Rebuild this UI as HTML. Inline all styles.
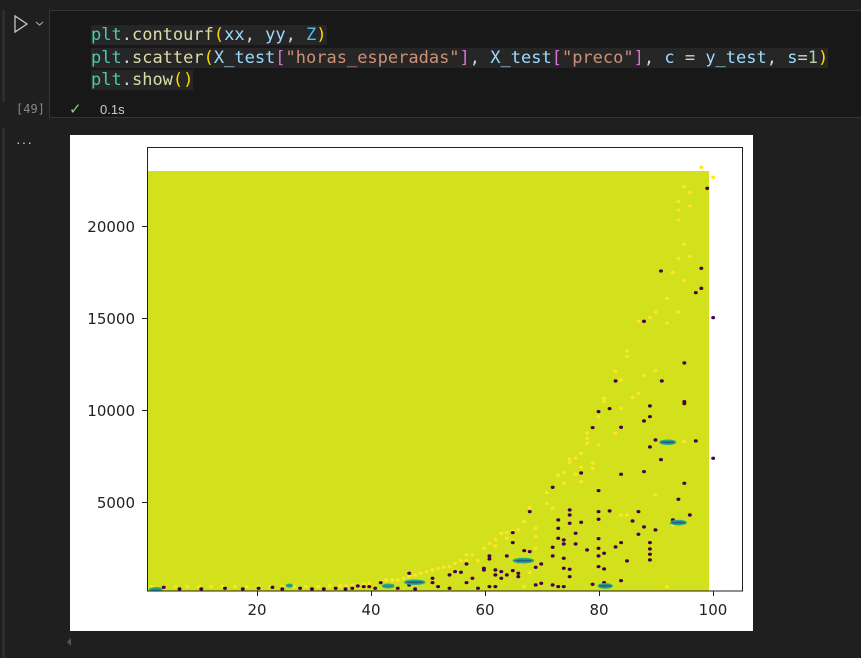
<!DOCTYPE html>
<html><head><meta charset="utf-8"><style>
body{margin:0;width:861px;height:658px;background:#1f1f1f;overflow:hidden;position:relative;font-family:"Liberation Sans",sans-serif}
.abs{position:absolute}
.code{font-family:"DejaVu Sans Mono","Liberation Mono",monospace;font-size:17px;white-space:pre;color:#d4d4d4;line-height:22.5px}
.hl{background:#262626}
.f{color:#dcdcaa}.v{color:#9cdcfe}.p{color:#4ec9b0}.s{color:#ce9178}.y{color:#ffd700}.m{color:#da70d6}.c{color:#4fc1ff}
.tick{font-family:"DejaVu Sans",sans-serif;font-size:15px;fill:#222}
</style></head><body>
<div class="abs" style="left:2px;top:10px;width:3px;height:92px;background:#2d2d2d"></div>
<div class="abs" style="left:2px;top:128px;width:3px;height:530px;background:#2d2d2d"></div>
<svg class="abs" style="left:12px;top:14px" width="40" height="20"><path d="M3 2 L3 18 L15 10 Z" fill="none" stroke="#c5c5c5" stroke-width="1.3"/><path d="M24 8 L27.5 11 L31 8" fill="none" stroke="#aaa" stroke-width="1.1"/></svg>
<div class="abs" style="left:49px;top:10px;width:812px;height:108px;border:1px solid #333;border-right:none;background:#181818;box-sizing:border-box"></div>
<div class="abs code" style="left:91px;top:24px"><span class="hl"><span class="p">plt</span>.<span class="f">contourf</span><span class="y">(</span><span class="v">xx</span>, <span class="v">yy</span>, <span class="c">Z</span><span class="y">)</span></span>
<span class="hl"><span class="p">plt</span>.<span class="f">scatter</span><span class="y">(</span><span class="v">X_test</span><span class="m">[</span><span class="s">"horas_esperadas"</span><span class="m">]</span>, <span class="v">X_test</span><span class="m">[</span><span class="s">"preco"</span><span class="m">]</span>, <span class="v">c</span> = <span class="v">y_test</span>, <span class="v">s</span>=<span style="color:#b5cea8">1</span><span class="y">)</span></span>
<span class="hl"><span class="p">plt</span>.<span class="f">show</span><span class="y">()</span></span></div>
<div class="abs" style="left:16px;top:102px;color:#888;font-size:12px;font-family:'DejaVu Sans Mono',monospace">[49]</div>
<div class="abs" style="left:69px;top:100px;color:#89d185;font-size:15px">✓</div>
<div class="abs" style="left:100px;top:102px;color:#ccc;font-size:13px">0.1s</div>
<div class="abs" style="left:16px;top:134px;color:#ccc;font-size:14px;letter-spacing:1px">···</div>
<svg class="abs" style="left:64px;top:636px" width="10" height="12"><path d="M7 2 L3 6 L7 10Z" fill="#555"/></svg>
<div class="abs" style="left:70px;top:135px;width:683px;height:496px;background:#fff"></div>
<svg class="abs" style="left:0;top:0" width="861" height="658">
<rect x="147" y="171" width="562" height="420" fill="#d2e11b"/>
<g transform="translate(140,140) scale(0.3953,0.3333)">
<g fill="#fde725">
<ellipse cx="1420" cy="82" rx="5" ry="5"/><ellipse cx="1450" cy="112" rx="5" ry="5"/><ellipse cx="1377" cy="140" rx="5" ry="5"/><ellipse cx="1391" cy="158" rx="5" ry="5"/><ellipse cx="1362" cy="185" rx="5" ry="5"/><ellipse cx="1391" cy="198" rx="5" ry="5"/><ellipse cx="1362" cy="210" rx="5" ry="5"/><ellipse cx="1362" cy="240" rx="5" ry="5"/><ellipse cx="1377" cy="313" rx="5" ry="5"/><ellipse cx="1362" cy="355" rx="5" ry="5"/><ellipse cx="1391" cy="349" rx="5" ry="5"/><ellipse cx="1348" cy="397" rx="5" ry="5"/><ellipse cx="1377" cy="421" rx="5" ry="5"/><ellipse cx="1333" cy="475" rx="5" ry="5"/><ellipse cx="1304" cy="516" rx="5" ry="5"/><ellipse cx="1362" cy="516" rx="5" ry="5"/><ellipse cx="1290" cy="533" rx="5" ry="5"/><ellipse cx="1261" cy="544" rx="5" ry="5"/><ellipse cx="1333" cy="549" rx="5" ry="5"/><ellipse cx="1232" cy="633" rx="5" ry="5"/><ellipse cx="1232" cy="650" rx="5" ry="5"/><ellipse cx="1304" cy="692" rx="5" ry="5"/><ellipse cx="1275" cy="706" rx="5" ry="5"/><ellipse cx="1203" cy="694" rx="5" ry="5"/><ellipse cx="1217" cy="720" rx="5" ry="5"/><ellipse cx="1261" cy="760" rx="5" ry="5"/><ellipse cx="1246" cy="772" rx="5" ry="5"/><ellipse cx="1174" cy="775" rx="5" ry="5"/><ellipse cx="1174" cy="785" rx="5" ry="5"/><ellipse cx="1217" cy="805" rx="5" ry="5"/><ellipse cx="1160" cy="830" rx="5" ry="5"/><ellipse cx="1203" cy="880" rx="5" ry="5"/><ellipse cx="1131" cy="880" rx="5" ry="5"/><ellipse cx="1131" cy="895" rx="5" ry="5"/><ellipse cx="1131" cy="910" rx="5" ry="5"/><ellipse cx="1160" cy="915" rx="5" ry="5"/><ellipse cx="1116" cy="940" rx="5" ry="5"/><ellipse cx="1102" cy="955" rx="5" ry="5"/><ellipse cx="1087" cy="958" rx="5" ry="5"/><ellipse cx="1087" cy="968" rx="5" ry="5"/><ellipse cx="1145" cy="970" rx="5" ry="5"/><ellipse cx="1145" cy="985" rx="5" ry="5"/><ellipse cx="1116" cy="982" rx="5" ry="5"/><ellipse cx="1072" cy="997" rx="5" ry="5"/><ellipse cx="1102" cy="1003" rx="5" ry="5"/><ellipse cx="1116" cy="1025" rx="5" ry="5"/><ellipse cx="1072" cy="1030" rx="5" ry="5"/><ellipse cx="1058" cy="1005" rx="5" ry="5"/><ellipse cx="1029" cy="1058" rx="5" ry="5"/><ellipse cx="1029" cy="1090" rx="5" ry="5"/><ellipse cx="1044" cy="1105" rx="5" ry="5"/><ellipse cx="986" cy="1103" rx="5" ry="5"/><ellipse cx="972" cy="1145" rx="5" ry="5"/><ellipse cx="957" cy="1170" rx="5" ry="5"/><ellipse cx="943" cy="1172" rx="5" ry="5"/><ellipse cx="928" cy="1178" rx="5" ry="5"/><ellipse cx="928" cy="1195" rx="5" ry="5"/><ellipse cx="914" cy="1180" rx="5" ry="5"/><ellipse cx="899" cy="1198" rx="5" ry="5"/><ellipse cx="899" cy="1218" rx="5" ry="5"/><ellipse cx="884" cy="1210" rx="5" ry="5"/><ellipse cx="870" cy="1225" rx="5" ry="5"/><ellipse cx="841" cy="1245" rx="5" ry="5"/><ellipse cx="826" cy="1245" rx="5" ry="5"/><ellipse cx="855" cy="1262" rx="5" ry="5"/><ellipse cx="826" cy="1262" rx="5" ry="5"/><ellipse cx="812" cy="1262" rx="5" ry="5"/><ellipse cx="797" cy="1270" rx="5" ry="5"/><ellipse cx="783" cy="1280" rx="5" ry="5"/><ellipse cx="768" cy="1282" rx="5" ry="5"/><ellipse cx="754" cy="1285" rx="5" ry="5"/><ellipse cx="740" cy="1290" rx="5" ry="5"/><ellipse cx="725" cy="1295" rx="5" ry="5"/><ellipse cx="710" cy="1300" rx="5" ry="5"/><ellipse cx="696" cy="1305" rx="5" ry="5"/><ellipse cx="681" cy="1310" rx="5" ry="5"/><ellipse cx="667" cy="1315" rx="5" ry="5"/><ellipse cx="652" cy="1320" rx="5" ry="5"/><ellipse cx="638" cy="1320" rx="5" ry="5"/><ellipse cx="623" cy="1320" rx="5" ry="5"/><ellipse cx="609" cy="1325" rx="5" ry="5"/><ellipse cx="580" cy="1330" rx="5" ry="5"/><ellipse cx="566" cy="1333" rx="5" ry="5"/><ellipse cx="551" cy="1335" rx="5" ry="5"/><ellipse cx="537" cy="1335" rx="5" ry="5"/><ellipse cx="522" cy="1338" rx="5" ry="5"/><ellipse cx="507" cy="1338" rx="5" ry="5"/><ellipse cx="1001" cy="1165" rx="5" ry="5"/><ellipse cx="1001" cy="1190" rx="5" ry="5"/><ellipse cx="986" cy="1298" rx="5" ry="5"/><ellipse cx="972" cy="1340" rx="5" ry="5"/><ellipse cx="1333" cy="1340" rx="5" ry="5"/><ellipse cx="1217" cy="1125" rx="5" ry="5"/><ellipse cx="1232" cy="1125" rx="5" ry="5"/><ellipse cx="1348" cy="1155" rx="5" ry="5"/><ellipse cx="1377" cy="905" rx="5" ry="5"/><ellipse cx="1304" cy="1065" rx="5" ry="5"/><ellipse cx="1001" cy="1225" rx="5" ry="5"/>
<ellipse cx="30" cy="1340" rx="5" ry="5"/><ellipse cx="60" cy="1340" rx="5" ry="5"/><ellipse cx="90" cy="1340" rx="5" ry="5"/><ellipse cx="120" cy="1340" rx="5" ry="5"/><ellipse cx="150" cy="1340" rx="5" ry="5"/><ellipse cx="180" cy="1340" rx="5" ry="5"/><ellipse cx="210" cy="1340" rx="5" ry="5"/><ellipse cx="240" cy="1340" rx="5" ry="5"/><ellipse cx="270" cy="1340" rx="5" ry="5"/><ellipse cx="300" cy="1340" rx="5" ry="5"/><ellipse cx="330" cy="1340" rx="5" ry="5"/><ellipse cx="360" cy="1340" rx="5" ry="5"/><ellipse cx="390" cy="1340" rx="5" ry="5"/><ellipse cx="420" cy="1340" rx="5" ry="5"/><ellipse cx="450" cy="1340" rx="5" ry="5"/><ellipse cx="480" cy="1338" rx="5" ry="5"/>
</g>
<g fill="#440154">
<ellipse cx="1435" cy="145" rx="5" ry="5"/><ellipse cx="1420" cy="385" rx="5" ry="5"/><ellipse cx="1420" cy="445" rx="5" ry="5"/><ellipse cx="1406" cy="458" rx="5" ry="5"/><ellipse cx="1318" cy="393" rx="5" ry="5"/><ellipse cx="1450" cy="533" rx="5" ry="5"/><ellipse cx="1275" cy="544" rx="5" ry="5"/><ellipse cx="1377" cy="669" rx="5" ry="5"/><ellipse cx="1320" cy="723" rx="5" ry="5"/><ellipse cx="1203" cy="723" rx="5" ry="5"/><ellipse cx="1377" cy="785" rx="5" ry="5"/><ellipse cx="1377" cy="791" rx="5" ry="5"/><ellipse cx="1290" cy="798" rx="5" ry="5"/><ellipse cx="1290" cy="830" rx="5" ry="5"/><ellipse cx="1275" cy="843" rx="5" ry="5"/><ellipse cx="1188" cy="806" rx="5" ry="5"/><ellipse cx="1160" cy="815" rx="5" ry="5"/><ellipse cx="1145" cy="863" rx="5" ry="5"/><ellipse cx="1217" cy="862" rx="5" ry="5"/><ellipse cx="1304" cy="900" rx="5" ry="5"/><ellipse cx="1406" cy="903" rx="5" ry="5"/><ellipse cx="1290" cy="921" rx="5" ry="5"/><ellipse cx="1318" cy="959" rx="5" ry="5"/><ellipse cx="1450" cy="955" rx="5" ry="5"/><ellipse cx="1275" cy="995" rx="5" ry="5"/><ellipse cx="1217" cy="1003" rx="5" ry="5"/><ellipse cx="1116" cy="999" rx="5" ry="5"/><ellipse cx="1160" cy="1052" rx="5" ry="5"/><ellipse cx="1377" cy="1030" rx="5" ry="5"/><ellipse cx="1362" cy="1078" rx="5" ry="5"/><ellipse cx="1044" cy="1042" rx="5" ry="5"/><ellipse cx="986" cy="1115" rx="5" ry="5"/><ellipse cx="1058" cy="1140" rx="5" ry="5"/><ellipse cx="1087" cy="1110" rx="5" ry="5"/><ellipse cx="1087" cy="1125" rx="5" ry="5"/><ellipse cx="1058" cy="1165" rx="5" ry="5"/><ellipse cx="1087" cy="1150" rx="5" ry="5"/><ellipse cx="1116" cy="1147" rx="5" ry="5"/><ellipse cx="1160" cy="1115" rx="5" ry="5"/><ellipse cx="1188" cy="1113" rx="5" ry="5"/><ellipse cx="1160" cy="1138" rx="5" ry="5"/><ellipse cx="1246" cy="1143" rx="5" ry="5"/><ellipse cx="1261" cy="1115" rx="5" ry="5"/><ellipse cx="1275" cy="1161" rx="5" ry="5"/><ellipse cx="1304" cy="1170" rx="5" ry="5"/><ellipse cx="1391" cy="1125" rx="5" ry="5"/><ellipse cx="1348" cy="1140" rx="5" ry="5"/><ellipse cx="1261" cy="1183" rx="5" ry="5"/><ellipse cx="1102" cy="1180" rx="5" ry="5"/><ellipse cx="1072" cy="1200" rx="5" ry="5"/><ellipse cx="1072" cy="1212" rx="5" ry="5"/><ellipse cx="1058" cy="1195" rx="5" ry="5"/><ellipse cx="1102" cy="1212" rx="5" ry="5"/><ellipse cx="1131" cy="1230" rx="5" ry="5"/><ellipse cx="1160" cy="1196" rx="5" ry="5"/><ellipse cx="1160" cy="1225" rx="5" ry="5"/><ellipse cx="1174" cy="1240" rx="5" ry="5"/><ellipse cx="1203" cy="1221" rx="5" ry="5"/><ellipse cx="1217" cy="1208" rx="5" ry="5"/><ellipse cx="1290" cy="1208" rx="5" ry="5"/><ellipse cx="1290" cy="1227" rx="5" ry="5"/><ellipse cx="1290" cy="1243" rx="5" ry="5"/><ellipse cx="1290" cy="1260" rx="5" ry="5"/><ellipse cx="1232" cy="1263" rx="5" ry="5"/><ellipse cx="1160" cy="1248" rx="5" ry="5"/><ellipse cx="1160" cy="1280" rx="5" ry="5"/><ellipse cx="1174" cy="1287" rx="5" ry="5"/><ellipse cx="1044" cy="1222" rx="5" ry="5"/><ellipse cx="1044" cy="1248" rx="5" ry="5"/><ellipse cx="1072" cy="1255" rx="5" ry="5"/><ellipse cx="1087" cy="1288" rx="5" ry="5"/><ellipse cx="1072" cy="1285" rx="5" ry="5"/><ellipse cx="1087" cy="1310" rx="5" ry="5"/><ellipse cx="1015" cy="1272" rx="5" ry="5"/><ellipse cx="1001" cy="1282" rx="5" ry="5"/><ellipse cx="986" cy="1235" rx="5" ry="5"/><ellipse cx="972" cy="1232" rx="5" ry="5"/><ellipse cx="957" cy="1265" rx="5" ry="5"/><ellipse cx="957" cy="1300" rx="5" ry="5"/><ellipse cx="957" cy="1310" rx="5" ry="5"/><ellipse cx="943" cy="1178" rx="5" ry="5"/><ellipse cx="943" cy="1208" rx="5" ry="5"/><ellipse cx="928" cy="1248" rx="5" ry="5"/><ellipse cx="943" cy="1292" rx="5" ry="5"/><ellipse cx="928" cy="1305" rx="5" ry="5"/><ellipse cx="914" cy="1295" rx="5" ry="5"/><ellipse cx="914" cy="1315" rx="5" ry="5"/><ellipse cx="899" cy="1290" rx="5" ry="5"/><ellipse cx="899" cy="1305" rx="5" ry="5"/><ellipse cx="884" cy="1248" rx="5" ry="5"/><ellipse cx="884" cy="1257" rx="5" ry="5"/><ellipse cx="870" cy="1285" rx="5" ry="5"/><ellipse cx="870" cy="1290" rx="5" ry="5"/><ellipse cx="841" cy="1315" rx="5" ry="5"/><ellipse cx="826" cy="1328" rx="5" ry="5"/><ellipse cx="826" cy="1272" rx="5" ry="5"/><ellipse cx="812" cy="1297" rx="5" ry="5"/><ellipse cx="797" cy="1295" rx="5" ry="5"/><ellipse cx="783" cy="1305" rx="5" ry="5"/><ellipse cx="855" cy="1345" rx="5" ry="5"/><ellipse cx="884" cy="1340" rx="5" ry="5"/><ellipse cx="899" cy="1340" rx="5" ry="5"/><ellipse cx="1001" cy="1335" rx="5" ry="5"/><ellipse cx="1015" cy="1330" rx="5" ry="5"/><ellipse cx="1044" cy="1335" rx="5" ry="5"/><ellipse cx="1058" cy="1340" rx="5" ry="5"/><ellipse cx="1072" cy="1340" rx="5" ry="5"/><ellipse cx="1145" cy="1333" rx="5" ry="5"/><ellipse cx="1174" cy="1328" rx="5" ry="5"/><ellipse cx="1217" cy="1322" rx="5" ry="5"/><ellipse cx="783" cy="1345" rx="5" ry="5"/><ellipse cx="754" cy="1340" rx="5" ry="5"/><ellipse cx="740" cy="1315" rx="5" ry="5"/><ellipse cx="740" cy="1328" rx="5" ry="5"/><ellipse cx="696" cy="1347" rx="5" ry="5"/><ellipse cx="681" cy="1300" rx="5" ry="5"/><ellipse cx="681" cy="1335" rx="5" ry="5"/><ellipse cx="652" cy="1345" rx="5" ry="5"/><ellipse cx="638" cy="1338" rx="5" ry="5"/><ellipse cx="609" cy="1328" rx="5" ry="5"/><ellipse cx="595" cy="1345" rx="5" ry="5"/><ellipse cx="580" cy="1340" rx="5" ry="5"/><ellipse cx="566" cy="1340" rx="5" ry="5"/><ellipse cx="551" cy="1338" rx="5" ry="5"/><ellipse cx="537" cy="1345" rx="5" ry="5"/>
<ellipse cx="45" cy="1347" rx="5" ry="5"/><ellipse cx="60" cy="1342" rx="5" ry="5"/><ellipse cx="100" cy="1347" rx="5" ry="5"/><ellipse cx="155" cy="1347" rx="5" ry="5"/><ellipse cx="215" cy="1345" rx="5" ry="5"/><ellipse cx="260" cy="1347" rx="5" ry="5"/><ellipse cx="300" cy="1345" rx="5" ry="5"/><ellipse cx="335" cy="1342" rx="5" ry="5"/><ellipse cx="360" cy="1347" rx="5" ry="5"/><ellipse cx="405" cy="1345" rx="5" ry="5"/><ellipse cx="435" cy="1347" rx="5" ry="5"/><ellipse cx="465" cy="1347" rx="5" ry="5"/><ellipse cx="495" cy="1345" rx="5" ry="5"/><ellipse cx="520" cy="1347" rx="5" ry="5"/>
</g>
<g fill="#21918c" stroke="#2fb47c" stroke-width="3">
<ellipse cx="970" cy="1262" rx="26" ry="7"/><ellipse cx="1335" cy="907" rx="20" ry="7"/><ellipse cx="1362" cy="1148" rx="20" ry="7"/><ellipse cx="695" cy="1327" rx="26" ry="7"/><ellipse cx="627" cy="1338" rx="14" ry="6"/><ellipse cx="1177" cy="1338" rx="18" ry="7"/><ellipse cx="378" cy="1337" rx="8" ry="5"/><ellipse cx="40" cy="1348" rx="16" ry="5"/>
</g>
<g fill="#31568b"><rect x="950" y="1260" width="40" height="4"/><rect x="1318" y="905" width="34" height="4"/><rect x="1345" y="1146" width="34" height="4"/><rect x="675" y="1325" width="40" height="4"/><rect x="1162" y="1336" width="30" height="4"/></g>
</g>
<rect x="147.5" y="147.5" width="595" height="443.5" fill="none" stroke="#222" stroke-width="1"/>
<g stroke="#222" stroke-width="1">
<line x1="142" y1="226.5" x2="147" y2="226.5"/><line x1="142" y1="318.5" x2="147" y2="318.5"/><line x1="142" y1="410.5" x2="147" y2="410.5"/><line x1="142" y1="502.5" x2="147" y2="502.5"/>
<line x1="257.5" y1="591" x2="257.5" y2="596"/><line x1="371.5" y1="591" x2="371.5" y2="596"/><line x1="485.5" y1="591" x2="485.5" y2="596"/><line x1="599.5" y1="591" x2="599.5" y2="596"/><line x1="713.5" y1="591" x2="713.5" y2="596"/>
</g>
<g class="tick" text-anchor="end"><text x="135" y="232">20000</text><text x="135" y="324">15000</text><text x="135" y="416">10000</text><text x="135" y="508">5000</text></g>
<g class="tick" text-anchor="middle"><text x="257" y="615">20</text><text x="371" y="615">40</text><text x="485" y="615">60</text><text x="599" y="615">80</text><text x="713" y="615">100</text></g>
</svg>
</body></html>
